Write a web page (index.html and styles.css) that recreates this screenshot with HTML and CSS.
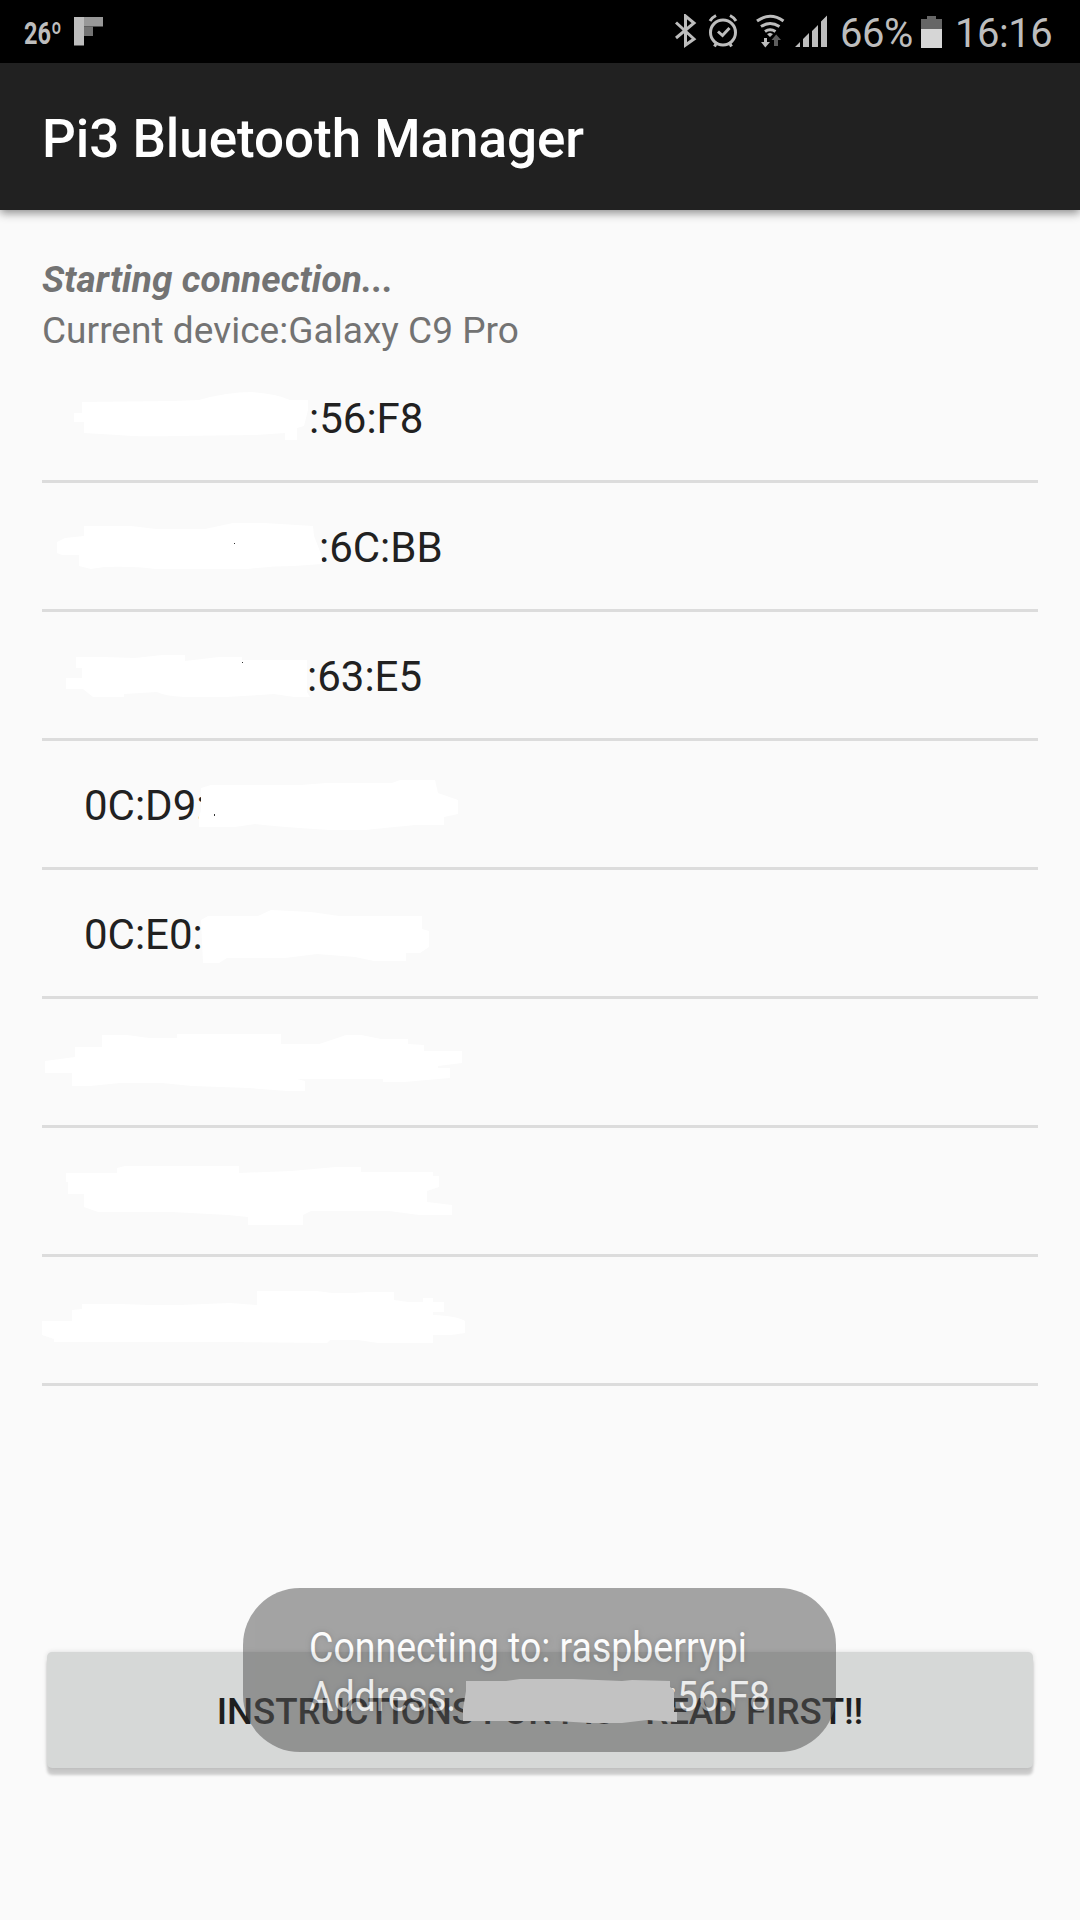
FILE: index.html
```html
<!DOCTYPE html>
<html lang="en">
<head>
<meta charset="utf-8">
<title>Pi3 Bluetooth Manager</title>
<link rel="stylesheet" href="styles.css">
</head>
<body>
<div class="screen">
  <header class="status-bar">
    <span class="temperature">26º</span>
    <svg class="flip-icon" width="29" height="29" viewBox="0 0 29 29"><path fill="#989898" d="M9.500 0H29V9.500H9.500z"/><path fill="#737373" d="M9.500 9.500H19V19H9.500z"/><path fill="#bdbdbd" d="M0 0H10V28.500H0z"/></svg>
    <svg class="status-icons" width="156" height="36" viewBox="0 0 156 36">
      <g fill="none" stroke="#bdbdbd" stroke-width="3">
        <path d="M1 8.500L19 25 10.500 31V2L19 9 1 24"/>
        <circle cx="48" cy="18.500" r="12.500"/>
        <path d="M43 17.500l4.500 4 7-7.500"/>
        <path d="M35 7q2-3.500 6-5.500M61 7q-2-3.500-6-5.500M42 28l-2.500 4.500M54 28l2.500 4.500"/>
        <path d="M82 7q13-9.500 26.500 0M86 12.500q9-6 18.500 0M90 17.500q5-3.500 10.500 0"/>
      </g>
      <path fill="#bdbdbd" d="M92 20l3-1.200 3 1.200-3 3zM89 24h3v4h3l-4.700 5.500L86 28h3z"/>
      <path fill="#5e5e5e" d="M99 32h4v-6h3l-4.800-5.500L96.500 26H99z"/>
      <path fill="#bdbdbd" d="M120 33l5-5v5zM128 25l6-6v14h-6zM137 17l6-6v22h-6zM146 7.500l6-6V33h-6z"/>
    </svg>
    <span class="battery-level">66%</span>
    <svg class="battery-icon" width="21" height="32" viewBox="0 0 21 32"><path fill="#666" d="M0 3h6V0h9v3h6v10H0z"/><path fill="#d6d6d6" d="M0 13h21v19H0z"/></svg>
    <span class="clock">16:16</span>
  </header>
  <div class="app-bar"><h1 class="title">Pi3 Bluetooth Manager</h1></div>
  <main class="content">
    <p class="line state"><span>Starting connection...</span></p>
    <p class="line"><span>Current device:Galaxy C9 Pro</span></p>
    <ul class="devices">
      <li class="device"><span class="address tail-a">:56:F8</span>
        <svg class="mask" viewBox="0 354 560 129"><path d="M74 413h8v-11l91-1 26-1q28-8 53-8 26 2 38 8h18v10l-4 16-7 2v12h-12v-7l-29 2-80 1q-40 1-58-1l-34-2v-11H74z"/></svg></li>
      <li class="device"><span class="address tail-b">:6C:BB</span>
        <svg class="mask" viewBox="0 483 560 129"><path d="M57 542l8-4 19-2v-10h47l25 3h49l14-3 14-3h31l49 3 1 10 7 18 1 10-28 2q-22 0-46 3h-93q-20-3-51-2l-13 2-12-3v-11H62l-5-2z"/><path class="speck" d="M234 543h1v1h-1z"/></svg></li>
      <li class="device"><span class="address tail-c">:63:E5</span>
        <svg class="mask" viewBox="0 612 560 129"><path d="M76 657h27l32 1 27-3h23v6l34-4h23v3h65v32l3 5h-16l-20-3q-30 2-50 3h-40q-20-1-27-5l-33 2v3H93l-10-8H66v-11h16v-10h-6z"/><path class="speck" d="M242 662h1v1h-1z"/></svg></li>
      <li class="device"><span class="address">0C:D9:</span>
        <svg class="mask" viewBox="0 741 560 129"><path d="M201 788l10-3h90l25-2h66l8-3h35l3 13 20 7v14l-14 3v8h-29q-40 4-50 5h-35q-50-3-75-6l-20 3h-36v-11l2-5z"/><path class="speck" d="M214 814h1v2h-1z"/></svg></li>
      <li class="device"><span class="address">0C:E0:</span>
        <svg class="mask" viewBox="0 870 560 129"><path d="M201 920l7-4h50l13-6 40 2 28 4h83v13l7 2v16l-9 6h-14v8h-32l-19-4-38-3-32 4h-58l-8 5h-16z"/></svg></li>
      <li class="device">
        <svg class="mask" viewBox="0 999 560 129"><path d="M45 1061l30-4v-10h27v-12h25l22 3h28v-4h104v10h38l27-9h15l20 4h27v5l16 1v6h38v12l-24 3v2h12v10l-46 4h-21v-3h-86l8 2v10h-18l-38-3-57-2-30-3H120l-30 3H72v-13H45z"/></svg></li>
      <li class="device">
        <svg class="mask" viewBox="0 1128 560 129"><path d="M66 1173h51v-5l8-2h114v7l52-2 45-4h25v5h72v4h6v11l-12 4v11l25 3v10h-33l-30-4h-78l-8 4v10h-55v-8l-20-2-56-3H98l-14-5v-13H68v-12h-2z"/></svg></li>
      <li class="device">
        <svg class="mask" viewBox="0 1257 560 129"><path d="M42 1321h30v-11l10-1v-5h38l30 1h30l50-2 27 2v-14h60l15 2h22l13-1h27v8l14 2h15v-4h10v4h11v10h-11v3q24 1 32 6v12l-14 2h-18v8h-55l-20-3h-28l-3 3-106-1H54v-3l-12-4z"/></svg></li>
    </ul>
    <button class="instructions"><span>INSTRUCTIONS FOR PI3 - READ FIRST!!</span></button>
  </main>
  <div class="toast">
    <p class="toast-text"><span>Connecting to: raspberrypi</span></p>
    <p class="toast-text"><span>Address:</span><span class="toast-tail">:56:F8</span></p>
  </div>
  <svg class="toast-mask" width="220" height="48" viewBox="460 1678 220 48"><path d="M466 1681h40l14-2h53l49 2 10-1 38 1v6l4 3v22h3v10l-30-2-25 3h-32l-33-2h-94v-12l3-18z"/></svg>
</div>
</body>
</html>
```
FILE: styles.css
```css
* { box-sizing: border-box; }
body { margin: 0; background: #fafafa; font-family: Roboto, "Liberation Sans", sans-serif; }
p, h1, ul { margin: 0; padding: 0; }
.screen { position: relative; width: 1080px; height: 1920px; overflow: hidden; background: #fafafa; }
.status-bar { display: flex; align-items: center; height: 63px; padding-left: 24px; background: #000; color: #bdbdbd; white-space: nowrap; }
.status-bar svg { flex: none; }
.temperature { width: 50px; font-size: 31px; font-weight: 700; transform: scaleX(.76); transform-origin: 0 50%; padding-top: 3px; }
.status-icons { margin-left: 572px; }
.battery-level { width: 79px; margin-left: 9px; font-size: 40px; letter-spacing: -.5px; padding-top: 4px; }
.clock { margin-left: 13px; font-size: 40px; letter-spacing: -.5px; padding-top: 4px; }
.battery-icon { margin-left: 2px; }
.app-bar { display: flex; align-items: center; position: relative; height: 147px; padding-left: 42px; background: #212121; color: #fff; box-shadow: 0 3px 9px rgba(0, 0, 0, .45); }
.title { font-size: 53px; font-weight: 500; line-height: 62px; letter-spacing: -.05px; white-space: nowrap; padding-top: 5px; }
.content { padding: 42px 42px 0; }
.line { height: 51px; padding-top: 6px; font-size: 37px; line-height: 43px; letter-spacing: .04px; color: #737373; }
.state { font-weight: 700; font-style: italic; letter-spacing: .1px; }
.devices { list-style: none; }
.device { position: relative; display: flex; align-items: center; height: 129px; padding-left: 42px; border-bottom: 3px solid #dcdcdc; color: #212121; font-size: 42px; }
.address { padding-top: 2px; }
.tail-a { margin-left: 225px; }
.tail-b { margin-left: 235px; }
.tail-c { margin-left: 223px; }
.mask { position: absolute; left: -42px; top: 0; width: 560px; height: 129px; fill: #fff; }
.speck { fill: #333; }
.instructions { display: flex; align-items: center; justify-content: center; width: 986px; height: 116px; margin: 266px 0 0 5px; padding: 2px 0 0; border: 0; border-radius: 5px; background: #d6d8d7; box-shadow: 0 7px 3px rgba(0, 0, 0, .19), 0 0 5px rgba(0, 0, 0, .12); color: #1e1e1e; font: 500 36.75px Roboto, sans-serif; letter-spacing: -.1px; white-space: nowrap; }
.toast { position: absolute; left: 243px; top: 1588px; width: 593px; height: 164px; padding: 35px 66px 0; border-radius: 57px; background: #565656; color: #fff; opacity: .524; }
.toast-text { display: flex; height: 49px; font-size: 42px; line-height: 49px; white-space: nowrap; text-shadow: 0 0 6px rgba(0, 0, 0, .6); transform: scaleX(.892); transform-origin: 0 0; }
.toast-tail { margin-left: 238px; }
.toast-mask { position: absolute; left: 460px; top: 1678px; fill: #c2c2c2; }
```
